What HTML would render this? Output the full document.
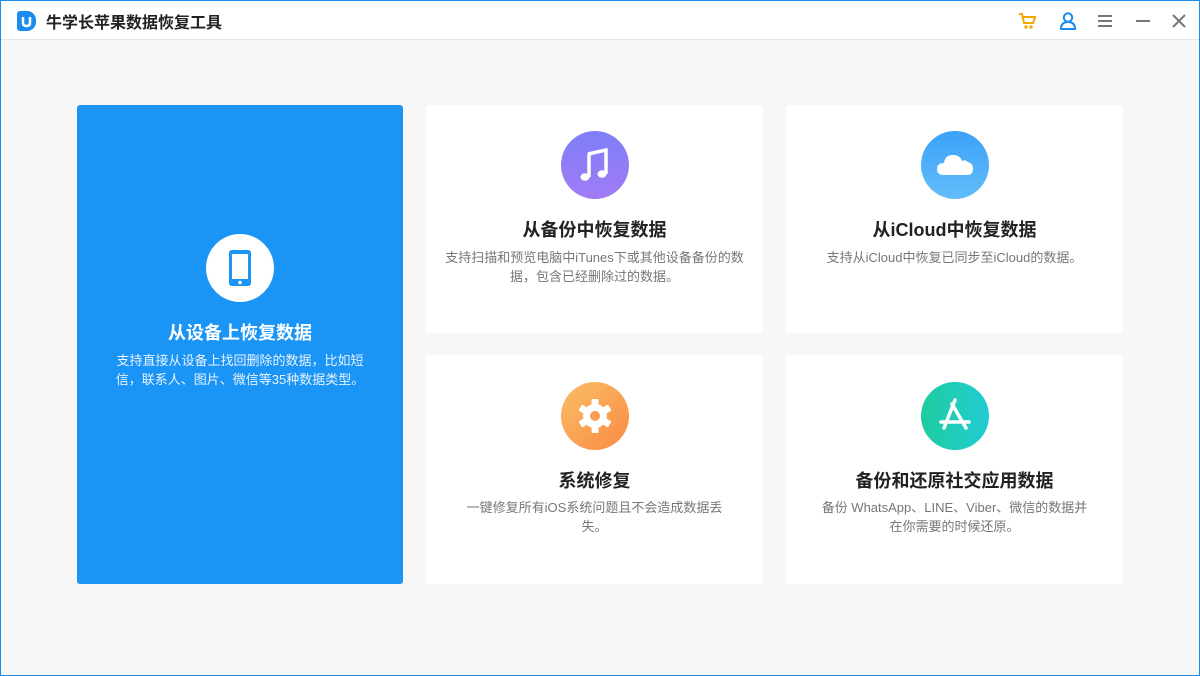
<!DOCTYPE html>
<html><head><meta charset="utf-8"><style>
*{margin:0;padding:0;box-sizing:border-box}
body{width:1200px;height:676px;overflow:hidden;background:#f7f7f7;font-family:"Liberation Sans","Noto Sans CJK SC",sans-serif;position:relative}
.frame{position:absolute;inset:0;border:1px solid #1a8cf0;border-top:none}
.top{position:absolute;left:0;top:0;width:1200px;height:40px;background:#fff;border-bottom:1px solid #e6e6e6;border-top:1px solid #1a8cf0}
.logo{position:absolute;left:17px;top:10px;width:19px;height:20px;background:#1a8cf0;border-radius:3px 9px 9px 3px}
.title{position:absolute;left:46px;top:8px;font-size:16px;color:#222;font-weight:bold}
.card{position:absolute;background:#fff;border-radius:3px;text-align:center}
.card h3{position:absolute;left:0;right:0;font-size:18px;font-weight:bold;color:#222}
.card p{position:absolute;left:0;right:0;font-size:13px;line-height:19px;color:#777;padding:0 14px}
.ic{position:absolute;width:68px;height:68px;border-radius:50%;left:50%;margin-left:-34px}
.ic svg{position:absolute;left:0;top:0}
</style></head><body>
<div class="top">
<div class="logo"><svg width="19" height="20"><path d="M6 6 L6 12 Q6 15 9.5 15 Q13 15 13 12 L13 6" stroke="#fff" stroke-width="2.5" fill="none"/></svg></div>
<div class="title">牛学长苹果数据恢复工具</div>
<svg style="position:absolute;left:1016px;top:10px" width="24" height="20"><path d="M3 3h3l2 9h9l2-6H7" stroke="#f5a700" stroke-width="2" fill="none"/><circle cx="10" cy="16" r="1.7" fill="#f5a700"/><circle cx="15" cy="16" r="1.7" fill="#f5a700"/></svg>
<svg style="position:absolute;left:1058px;top:10px" width="20" height="20"><circle cx="10" cy="6.5" r="4.2" stroke="#1a8cf0" stroke-width="2" fill="none"/><path d="M3 18 Q3 11 10 11 Q17 11 17 18 Z" stroke="#1a8cf0" stroke-width="2" fill="none"/></svg>
<svg style="position:absolute;left:1097px;top:13px" width="16" height="14"><path d="M1 2h14M1 7h14M1 12h14" stroke="#777" stroke-width="2"/></svg>
<svg style="position:absolute;left:1135px;top:13px" width="16" height="14"><path d="M1 7h14" stroke="#777" stroke-width="2"/></svg>
<svg style="position:absolute;left:1172px;top:13px" width="14" height="14"><path d="M1 1l12 12M13 1L1 13" stroke="#777" stroke-width="2"/></svg>
</div>
<div class="frame"></div>

<div class="card" style="left:77px;top:105px;width:326px;height:479px;background:#1a94f5">
<div class="ic" style="top:129px;background:#fff"><svg width="68" height="68"><rect x="23" y="16" width="22" height="36" rx="3" fill="#1a94f5"/><rect x="26" y="20" width="16" height="25" fill="#fff"/><circle cx="34" cy="48.5" r="1.8" fill="#fff"/></svg></div>
<h3 style="top:214px;color:#fff">从设备上恢复数据</h3>
<p style="top:246px;color:#e8f3ff;padding:0 30px">支持直接从设备上找回删除的数据，比如短信，联系人、图片、微信等35种数据类型。</p>
</div>

<div class="card" style="left:426px;top:105px;width:337px;height:228px">
<div class="ic" style="top:26px;background:linear-gradient(#7d7ff9,#a17bf5)"><svg width="68" height="68"><path d="M27 23 L45 19 L45 43" stroke="#fff" stroke-width="3.5" fill="none"/><path d="M28 23 V46" stroke="#fff" stroke-width="3.5"/><ellipse cx="24" cy="46" rx="4.5" ry="3.8" fill="#fff"/><ellipse cx="41" cy="43" rx="4.5" ry="3.8" fill="#fff"/></svg></div>
<h3 style="top:111px">从备份中恢复数据</h3>
<p style="top:143px">支持扫描和预览电脑中iTunes下或其他设备备份的数据，包含已经删除过的数据。</p>
</div>

<div class="card" style="left:786px;top:105px;width:337px;height:228px">
<div class="ic" style="top:26px;background:linear-gradient(#3ba1f8,#63bdfb)"><svg width="68" height="68"><path d="M23 44 Q16 44 16 38 Q16 32 23 32 Q24 24 32 24 Q39 24 41 30 Q44 28 47 31 Q52 32 52 38 Q52 44 46 44 Z" fill="#fff"/></svg></div>
<h3 style="top:111px">从iCloud中恢复数据</h3>
<p style="top:143px">支持从iCloud中恢复已同步至iCloud的数据。</p>
</div>

<div class="card" style="left:426px;top:355px;width:337px;height:229px">
<div class="ic" style="top:27px;background:linear-gradient(135deg,#f9be66,#fb8a45)"><svg width="68" height="68"><g transform="translate(34 34)" fill="#fff"><circle r="12"/><rect x="-3.5" y="-17" width="7" height="34" rx="1"/><rect x="-3.5" y="-17" width="7" height="34" rx="1" transform="rotate(60)"/><rect x="-3.5" y="-17" width="7" height="34" rx="1" transform="rotate(120)"/></g><circle cx="34" cy="34" r="5" fill="#fa9c52"/></svg></div>
<h3 style="top:112px">系统修复</h3>
<p style="top:143px;padding:0 34px">一键修复所有iOS系统问题且不会造成数据丢失。</p>
</div>

<div class="card" style="left:786px;top:355px;width:337px;height:229px">
<div class="ic" style="top:27px;background:linear-gradient(90deg,#1dcc9f,#22ccd3)"><svg width="68" height="68"><g stroke="#fff" stroke-width="3.5" stroke-linecap="round" fill="none"><path d="M34 18 L23 46"/><path d="M31 22 L45 46"/><path d="M20 40 H48"/></g></svg></div>
<h3 style="top:112px">备份和还原社交应用数据</h3>
<p style="top:143px;padding:0 33px">备份 WhatsApp、LINE、Viber、微信的数据并<br>在你需要的时候还原。</p>
</div>
</body></html>
